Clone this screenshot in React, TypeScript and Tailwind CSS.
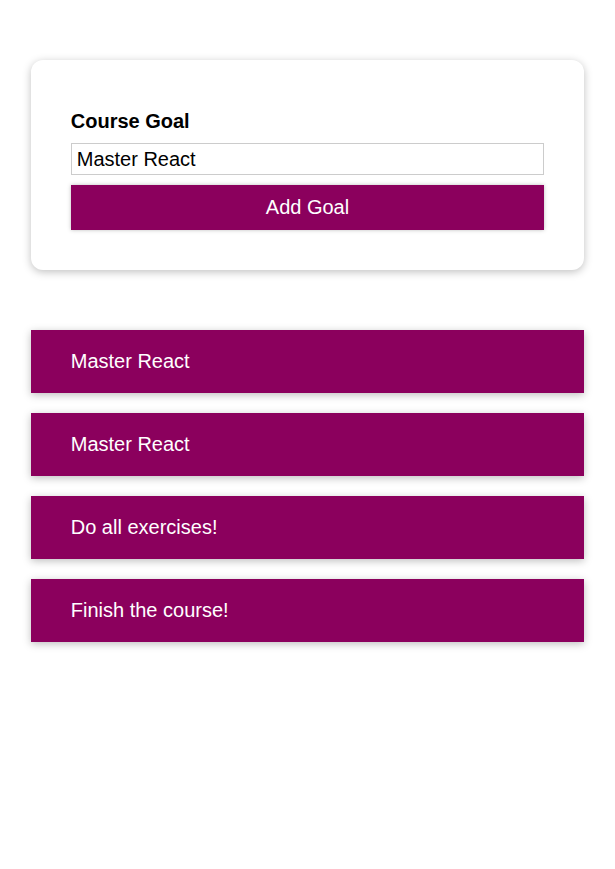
import React, { useState } from 'react';

const initialGoals = [
  { id: 'g4', text: 'Master React' },
  { id: 'g3', text: 'Master React' },
  { id: 'g1', text: 'Do all exercises!' },
  { id: 'g2', text: 'Finish the course!' },
];

const App: React.FC = () => {
  const [goals, setGoals] = useState(initialGoals);
  const [value, setValue] = useState('Master React');

  const addGoal = (e: React.FormEvent) => {
    e.preventDefault();
    if (!value.trim()) return;
    setGoals((prev) => [{ id: Math.random().toString(), text: value }, ...prev]);
  };

  return (
    <div className="min-h-screen bg-white pt-[60px] font-['Liberation_Sans',Arial,sans-serif]">
      <section className="w-[90%] mx-auto bg-white rounded-[12px] shadow-[0_2px_8px_rgba(0,0,0,0.25)] px-[40px] pt-[50px] pb-[40px]">
        <form onSubmit={addGoal}>
          <label className="block text-[20px] leading-[23px] font-bold text-black mb-[10px]">Course Goal</label>
          <input
            value={value}
            onChange={(e) => setValue(e.target.value)}
            className="block w-full h-[32px] border border-[#ccc] px-[5px] text-[20px] text-black outline-none"
          />
          <button
            type="submit"
            className="mt-[10px] w-full h-[45px] pb-[2px] bg-[#8b005d] text-white text-[20px] shadow-[0_0_4px_rgba(0,0,0,0.26)]"
          >
            Add Goal
          </button>
        </form>
      </section>

      <ul className="w-[90%] mx-auto mt-[60px] flex flex-col gap-[20px]">
        {goals.map((goal) => (
          <li
            key={goal.id}
            className="bg-[#8b005d] text-white text-[20px] leading-[23px] py-[20px] px-[40px] shadow-[0_2px_8px_rgba(0,0,0,0.26)]"
          >
            {goal.text}
          </li>
        ))}
      </ul>
    </div>
  );
};

export default App;
